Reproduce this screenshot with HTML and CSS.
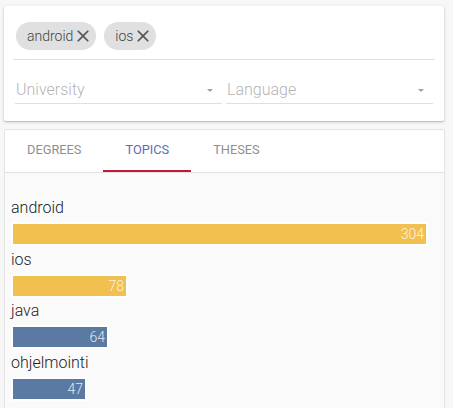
FILE: index.html
```html
<!DOCTYPE html>
<html>
<head>
<meta charset="utf-8">
<link rel="stylesheet" href="styles.css">
</head>
<body>
<div class="card filters">
  <div class="chips">
    <span class="chip">android<svg class="x" viewBox="0 0 24 24"><path d="M19 6.41L17.59 5 12 10.59 6.41 5 5 6.41 10.59 12 5 17.59 6.41 19 12 13.41 17.59 19 19 17.59 13.41 12z"/></svg></span>
    <span class="chip">ios<svg class="x" viewBox="0 0 24 24"><path d="M19 6.41L17.59 5 12 10.59 6.41 5 5 6.41 10.59 12 5 17.59 6.41 19 12 13.41 17.59 19 19 17.59 13.41 12z"/></svg></span>
  </div>
  <div class="selects">
    <div class="select"><span>University</span><span class="arrow"></span></div>
    <div class="select"><span>Language</span><span class="arrow"></span></div>
  </div>
</div>
<div class="card results">
  <div class="tabs">
    <div class="tab">DEGREES</div>
    <div class="tab active">TOPICS</div>
    <div class="tab">THESES</div>
  </div>
  <div class="content">
    <div class="row">
      <div class="label">android</div>
      <div class="barwrap"><div class="bar yellow" style="width:413px">304</div></div>
    </div>
    <div class="row">
      <div class="label">ios</div>
      <div class="barwrap"><div class="bar yellow" style="width:113px">78</div></div>
    </div>
    <div class="row">
      <div class="label">java</div>
      <div class="barwrap"><div class="bar blue" style="width:94px">64</div></div>
    </div>
    <div class="row">
      <div class="label">ohjelmointi</div>
      <div class="barwrap"><div class="bar blue" style="width:72px">47</div></div>
    </div>
  </div>
</div>
</body>
</html>
```
FILE: styles.css
```css
html, body {
  margin: 0;
  padding: 0;
}
body {
  background: #f7f7f7;
  font-family: Roboto, "Liberation Sans", sans-serif;
  font-weight: 300;
  overflow: hidden;
}
.card {
  background: #fff;
  border-radius: 2px;
}
.filters {
  margin: 6px 9px 0 4px;
  padding: 0 9px 17px;
  box-shadow: 0 1px 3px rgba(0,0,0,0.22), 0 1px 1px rgba(0,0,0,0.08);
}
.chips {
  display: flex;
  gap: 8px;
  padding: 16px 3px 9px;
  border-bottom: 1px solid #e0e0e0;
}
.chip {
  display: inline-flex;
  align-items: center;
  height: 28px;
  border-radius: 14px;
  background: #e0e0e0;
  color: #444;
  font-size: 14px;
  padding: 0 3px 0 11px;
}
.x {
  width: 20px;
  height: 20px;
  margin-left: 0;
  fill: #555;
}
.selects {
  display: flex;
  gap: 4px;
  padding: 20px 2px 0;
}
.select {
  flex: 1;
  display: flex;
  align-items: center;
  justify-content: space-between;
  height: 20px;
  padding: 0 9px 3px 1px;
  border-bottom: 1px solid #e0e0e0;
  color: #b5b5b5;
  font-size: 16px;
  line-height: 20px;
}
.arrow {
  width: 0;
  height: 0;
  border-left: 3px solid transparent;
  border-right: 3px solid transparent;
  border-top: 3px solid #a0a0a0;
}
.results {
  margin: 8px 8px 0 4px;
  border: 1px solid #e3e3e3;
  border-bottom: none;
  overflow: hidden;
}
.tabs {
  display: flex;
  border-bottom: 1px solid #e0e0e0;
}
.tab {
  padding: 0 22px;
  height: 40px;
  line-height: 40px;
  font-size: 12.8px;
  font-weight: 400;
  color: #8f8f8f;
  border-bottom: 2px solid transparent;
  margin-left: 0;
}
.tab.active {
  color: #5c6bc0;
  border-bottom-color: #c01a3a;
}
.content {
  background: #fafafa;
  padding: 25px 6px 40px;
}
.row {
  display: flex;
  flex-direction: column;
  align-items: flex-start;
}
.label {
  font-size: 16px;
  line-height: 20px;
  color: #222;
}
.barwrap {
  background: #fff;
  padding: 2px;
  margin: 4px 0 3.7px;
}
.bar {
  height: 20px;
  line-height: 20px;
  font-size: 14px;
  color: rgba(255,255,255,0.85);
  text-align: right;
  padding-right: 2px;
  box-sizing: border-box;
}
.yellow { background: #f1c04e; }
.blue { background: #5b7aa3; }
```
